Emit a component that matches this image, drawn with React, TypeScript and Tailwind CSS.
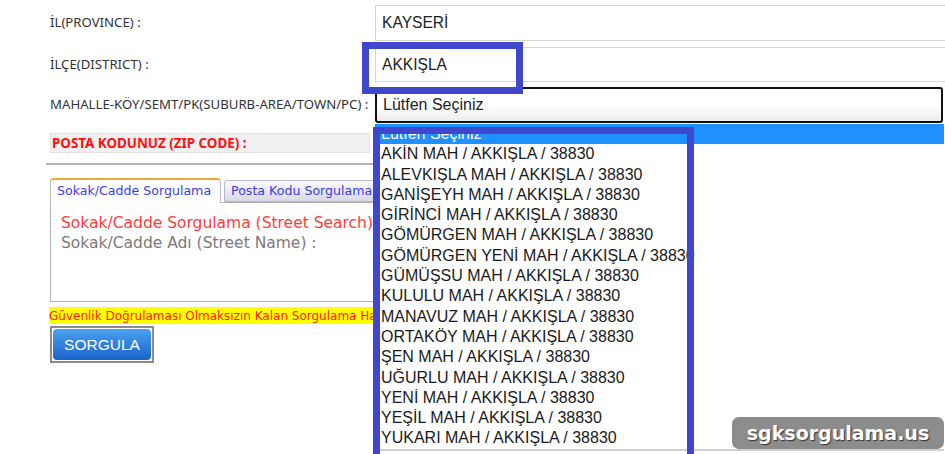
import React from "react";

const items = [
  "AKİN MAH / AKKIŞLA / 38830",
  "ALEVKIŞLA MAH / AKKIŞLA / 38830",
  "GANİŞEYH MAH / AKKIŞLA / 38830",
  "GİRİNCİ MAH / AKKIŞLA / 38830",
  "GÖMÜRGEN MAH / AKKIŞLA / 38830",
  "GÖMÜRGEN YENİ MAH / AKKIŞLA / 38830",
  "GÜMÜŞSU MAH / AKKIŞLA / 38830",
  "KULULU MAH / AKKIŞLA / 38830",
  "MANAVUZ MAH / AKKIŞLA / 38830",
  "ORTAKÖY MAH / AKKIŞLA / 38830",
  "ŞEN MAH / AKKIŞLA / 38830",
  "UĞURLU MAH / AKKIŞLA / 38830",
  "YENİ MAH / AKKIŞLA / 38830",
  "YEŞİL MAH / AKKIŞLA / 38830",
  "YUKARI MAH / AKKIŞLA / 38830",
];

const labelCls = "w-[325px] shrink-0 text-[13.2px] text-[#333] font-['Noto_Sans',sans-serif]";
const inputCls =
  "w-[600px] shrink-0 h-full flex items-center pl-[6px] border border-[#d6d6d6] bg-white text-[15.6px] text-[#222] font-['Liberation_Sans',Arial,sans-serif]";

export default function App() {
  return (
    <div className="relative w-[945px] h-[454px] overflow-hidden bg-white">
      <div className="pl-[50px] pt-[5px]">
        <div className="flex items-center h-[36px]">
          <span className={labelCls}>İL(PROVINCE) :</span>
          <div className={inputCls}>KAYSERİ</div>
        </div>
        <div className="flex items-center h-[35px] mt-[6px]">
          <span className={labelCls}>İLÇE(DISTRICT) :</span>
          <div className={inputCls}>AKKIŞLA</div>
        </div>
        <div className="flex items-center h-[36px] mt-[5px]">
          <span className={labelCls}>MAHALLE-KÖY/SEMT/PK(SUBURB-AREA/TOWN/PC) :</span>
          <div className="w-[568px] shrink-0 h-full flex items-center pl-[6px] border-2 border-[#111] rounded-[3px] bg-gradient-to-b from-white via-white to-[#ececec] text-[16px] text-[#222] font-['Liberation_Sans',Arial,sans-serif]">
            Lütfen Seçiniz
          </div>
        </div>
        <div className="mt-[10px] w-[320px] h-[20px] flex items-center pl-[1px] bg-[#f0f0f0] border border-[#e2e2e2] text-[13.4px] font-bold text-[#ff1010] font-['Noto_Sans',sans-serif]">
          POSTA KODUNUZ (ZIP CODE) :
        </div>

        <div className="mt-[10px] -ml-[4px] w-[330px] h-[2px] bg-[#b4b4b4]" />

        <div className="mt-[12px] w-[420px] font-['DejaVu_Sans',Verdana,sans-serif]">
          <div className="flex items-end h-[25px]">
            <div className="w-[171px] h-[25px] flex items-center pl-[6px] bg-white border border-b-0 border-[#bbb] border-t-2 border-t-[#f2a93b] rounded-t-[4px] text-[12.6px] text-[#3c3ce6] relative top-[1px]">
              Sokak/Cadde Sorgulama
            </div>
            <div className="ml-[3px] w-[200px] h-[22px] flex items-center pl-[6px] bg-gradient-to-b from-[#fafafc] to-[#d9d9e6] border border-[#b8b8c8] rounded-t-[3px] text-[12.6px] text-[#3c3ce6]">
              Posta Kodu Sorgulama
            </div>
          </div>
          <div className="h-[100px] border border-[#b0b0b0] pl-[10px] pt-[10px]">
            <div className="text-[15.5px] leading-[20px] text-[#ff3b3b]">
              Sokak/Cadde Sorgulama (Street Search)
            </div>
            <div className="text-[15.5px] leading-[20px] text-[#7a7a7a]">
              Sokak/Cadde Adı (Street Name) :
            </div>
          </div>
        </div>

        <div className="mt-[5px] -ml-[1px] w-[420px] h-[17px] bg-[#ffff00] flex items-center whitespace-nowrap overflow-hidden text-[12px] text-[#ff1a1a] font-['DejaVu_Sans',Tahoma,sans-serif]">
          Güvenlik Doğrulaması Olmaksızın Kalan Sorgulama Hakkınız
        </div>

        <div className="mt-[2px] w-[104px] h-[37px] border-2 border-[#8c8c8c] p-[1px]">
          <div className="w-full h-full rounded-[4px] bg-gradient-to-b from-[#4aa2f0] to-[#1b62cc] flex items-center justify-center text-white text-[15.5px] font-['Liberation_Sans',Arial,sans-serif]">
            SORGULA
          </div>
        </div>
      </div>

      {/* open select list */}
      <div className="absolute left-[375px] top-[124px] w-[569px] h-[327px] bg-white border-b-2 border-[#d0d0d0] text-[16px] text-[#1a1a1a] font-['Liberation_Sans',Arial,sans-serif] whitespace-nowrap overflow-hidden">
        <div className="h-[20.3px] leading-[20.3px] pl-[6px] bg-[#1e90ff] text-white">Lütfen Seçiniz</div>
        {items.map((it) => (
          <div key={it} className="h-[20.3px] leading-[20.3px] pl-[6px]">
            {it}
          </div>
        ))}
      </div>

      {/* annotation boxes */}
      <div className="absolute left-[362px] top-[42px] w-[161px] h-[52px] border-[7px] border-[#3f48cc]" />
      <div className="absolute left-[373px] top-[127px] w-[321px] h-[335px] border-[7px] border-[#3f48cc]" />

      <div className="absolute left-[732px] top-[417px] w-[212px] h-[32px] rounded-[7px] bg-[#8c8c8c] flex items-center justify-center text-white font-bold text-[19px] font-['DejaVu_Sans',sans-serif] [text-shadow:1px_1px_1px_#333]">
        sgksorgulama.us
      </div>
    </div>
  );
}
